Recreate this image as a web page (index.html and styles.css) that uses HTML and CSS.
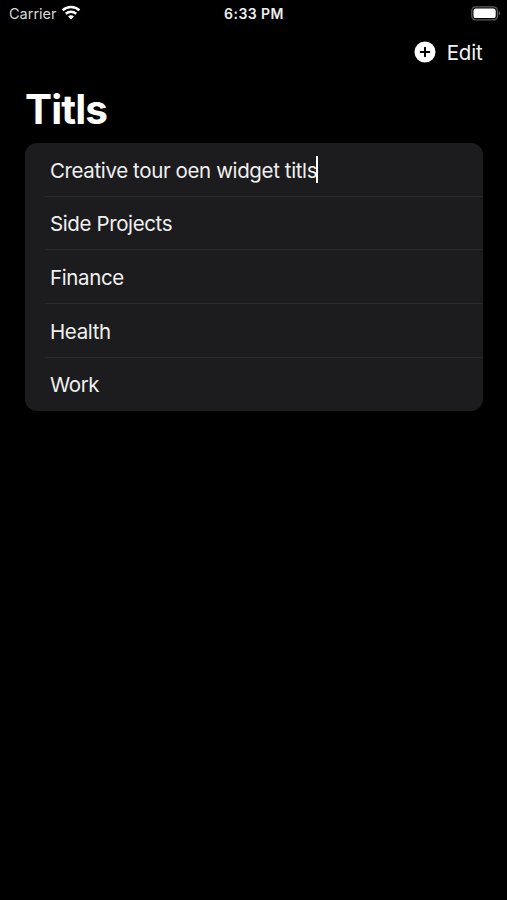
FILE: index.html
```html
<!DOCTYPE html>
<html lang="en">
<head>
<meta charset="utf-8">
<title>Titls</title>
<link rel="stylesheet" href="styles.css">
</head>
<body>
<div class="status">
  <div class="status-left">
    <span class="carrier">Carrier</span>
    <svg class="wifi" width="20" height="15" viewBox="0 0 20 15" fill="none" stroke="#fff" stroke-width="2.5">
      <path d="M1.6 5.3C6.3.9 13.7.9 18.4 5.3"/>
      <path d="M4.8 8.7C7.8 6 12.2 6 15.2 8.7"/>
      <path d="M10 14.4 7.1 11.4C8.7 9.9 11.3 9.9 12.9 11.4Z" fill="#fff" stroke="none"/>
    </svg>
  </div>
  <span class="time">6:33 PM</span>
  <svg class="battery" width="31" height="15" viewBox="0 0 31 15">
    <rect x=".8" y=".8" width="25.6" height="13" rx="3.8" fill="none" stroke="#5c5c5c" stroke-width="1.3"/>
    <rect x="2.5" y="2.5" width="22.2" height="9.6" rx="2.2" fill="#fff"/>
    <path d="M27.8 5.1C29.8 5.8 29.8 8.8 27.8 9.5Z" fill="#5c5c5c"/>
  </svg>
</div>
<nav class="toolbar">
  <svg class="add" width="22" height="22" viewBox="0 0 22 22">
    <circle cx="11" cy="11" r="10.5" fill="#fff"/>
    <path d="M11 6.7V15.3M6.7 11H15.3" stroke="#000" stroke-width="2" stroke-linecap="round"/>
  </svg>
  <span class="edit">Edit</span>
</nav>
<h1 class="title">Titls</h1>
<ul class="list">
  <li class="row"><span>Creative tour oen widget titls</span><i class="caret"></i></li>
  <li class="row"><span>Side Projects</span></li>
  <li class="row"><span>Finance</span></li>
  <li class="row"><span>Health</span></li>
  <li class="row"><span>Work</span></li>
</ul>
</body>
</html>
```
FILE: styles.css
```css
* { box-sizing: border-box; }
body {
  margin: 0;
  min-height: 900px;
  background: #000;
  color: #fff;
  font-family: Inter, "Liberation Sans", sans-serif;
}
.status {
  display: grid;
  grid-template-columns: 1fr auto 1fr;
  align-items: center;
  height: 27px;
  padding: 0 5px 0 9px;
}
.status-left { display: flex; align-items: center; gap: 4px; }
.carrier { font-size: 14.5px; color: #d8d8d8; }
.wifi { margin-top: -2px; }
.time {
  margin-left: -3px;
  font-size: 14px;
  font-weight: 600;
  letter-spacing: 0.45px;
  color: #eee;
}
.battery { justify-self: end; }
.toolbar {
  display: flex;
  justify-content: flex-end;
  align-items: center;
  gap: 11px;
  height: 50px;
  padding-right: 24.5px;
}
.add { margin-top: 0; }
.edit {
  padding-top: 2px;
  font-size: 20.5px;
  line-height: 26px;
  letter-spacing: -0.2px;
  color: #f2f2f2;
}
.title {
  margin: 8px 0 0 25px;
  font-size: 40.5px;
  line-height: 49px;
  font-weight: 700;
  letter-spacing: -0.9px;
}
.list {
  list-style: none;
  margin: 8.5px 24.5px 0 25px;
  padding: 0;
  background: #1c1c1e;
  border-radius: 12px;
}
.row {
  position: relative;
  display: flex;
  align-items: center;
  height: 53.7px;
  padding: 1.6px 0 0 25px;
  font-size: 20.5px;
  letter-spacing: -0.38px;
  color: #f0f0f0;
  white-space: nowrap;
}
.row:not(:last-child)::after {
  content: "";
  position: absolute;
  left: 20px;
  right: 0;
  bottom: -0.5px;
  height: 1px;
  background: #29292b;
}
.caret { width: 2px; height: 27px; margin: -2px 0 0 -1px; background: #fff; }
```
